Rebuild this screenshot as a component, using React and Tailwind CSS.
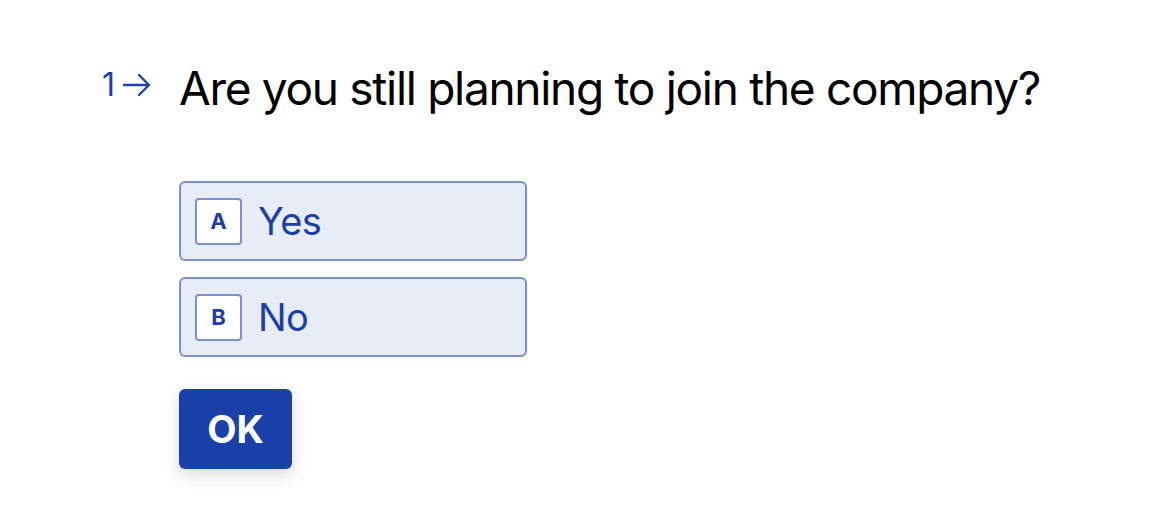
import React, { useState } from "react";

const options = [
  { key: "A", label: "Yes" },
  { key: "B", label: "No" },
];

const App = () => {
  const [selected, setSelected] = useState(null);

  return (
    <div
      className="min-h-[512px] w-full bg-white"
      style={{ fontFamily: "Inter, 'Noto Sans', sans-serif" }}
    >
      <div className="flex pl-[102px] pt-[56px]">
        <div className="flex w-[77px] items-center gap-[7px] pt-[13px] self-start text-[#1e40af]">
          <span className="text-[32px] leading-none">1</span>
          <svg width="30" height="24" viewBox="0 0 30 24" fill="none">
            <path
              d="M2 12h25M17 2l10 10-10 10"
              stroke="currentColor"
              strokeWidth="2.4"
              strokeLinecap="round"
              strokeLinejoin="round"
            />
          </svg>
        </div>

        <div className="flex flex-col">
          <h1 className="text-[46px] leading-[64px] tracking-[-1.3px] text-black">
            Are you still planning to join the company?
          </h1>

          <div className="mt-[61px] flex flex-col gap-[16px]">
            {options.map((o) => (
              <button
                key={o.key}
                onClick={() => setSelected(o.key)}
                className={`flex h-[80px] w-[348px] items-center gap-[16px] rounded-[6px] border-2 px-[14px] text-left ${
                  selected === o.key
                    ? "border-[#1e40af] bg-[#d3dbf0]"
                    : "border-[#7891d1] bg-[#e8ecf6]"
                }`}
              >
                <span className="flex h-[47px] w-[47px] items-center justify-center rounded-[4px] border-2 border-[#7891d1] bg-white text-[22px] font-bold text-[#1b3fa6]">
                  {o.key}
                </span>
                <span className="text-[38px] tracking-[-0.6px] text-[#1b3fa6]">
                  {o.label}
                </span>
              </button>
            ))}
          </div>

          <button className="mt-[32px] h-[80px] w-[113px] rounded-[6px] bg-[#1a41a9] text-[38px] font-bold text-white shadow-[0_6px_16px_rgba(0,0,0,0.15)]">
            OK
          </button>
        </div>
      </div>
    </div>
  );
};

export default App;
